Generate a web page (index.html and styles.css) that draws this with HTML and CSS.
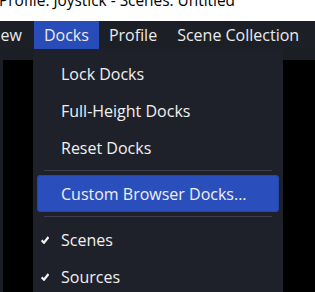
FILE: index.html
```html
<!DOCTYPE html>
<html lang="en">
<head>
  <meta charset="UTF-8" />
  <title>Docks menu</title>
  <link rel="stylesheet" href="styles.css">
</head>
<body>
  <div class="window">

    <!-- Title bar -->
    <div class="titlebar">
      <span class="title">Profile: Joystick - Scenes: Untitled</span>
    </div>

    <!-- Menu bar -->
    <div class="menubar">
      <span class="menubar-item cut">View</span>
      <span class="menubar-item active">Docks</span>
      <span class="menubar-item">Profile</span>
      <span class="menubar-item">Scene Collection</span>
    </div>

    <!-- Dock area behind the menu -->
    <div class="workspace">
      <div class="dock dock-left"></div>
      <div class="dock dock-right"></div>
    </div>

    <!-- Docks dropdown -->
    <div class="dropdown">
      <div class="menu-item">Lock Docks</div>
      <div class="menu-item">Full-Height Docks</div>
      <div class="menu-item">Reset Docks</div>
      <div class="separator"></div>
      <div class="menu-item selected">Custom Browser Docks...</div>
      <div class="separator"></div>
      <div class="menu-item checked">
        <svg class="check" viewBox="0 0 8 8" width="8" height="8"><path d="M0.7 4.3 L3 6.7 L7.5 1" fill="none" stroke="#f4f4f4" stroke-width="2.2"/></svg>
        Scenes
      </div>
      <div class="menu-item checked">
        <svg class="check" viewBox="0 0 8 8" width="8" height="8"><path d="M0.7 4.3 L3 6.7 L7.5 1" fill="none" stroke="#f4f4f4" stroke-width="2.2"/></svg>
        Sources
      </div>
    </div>

  </div>
</body>
</html>
```

FILE: styles.css
```css
body {
  margin: 0;
  padding: 0;
  font-family: 'Open Sans', 'Noto Sans', sans-serif;
  background-color: #1c1e25;
}

.window {
  width: 315px;
  height: 292px;
  position: relative;
  overflow: hidden;
  display: flex;
  flex-direction: column;
}

.titlebar {
  height: 21px;
  background-color: #ffffff;
  overflow: hidden;
  flex-shrink: 0;
}

.title {
  display: block;
  margin-top: -10px;
  margin-left: -1px;
  font-family: 'Open Sans', 'Noto Sans', sans-serif;
  font-size: 15.4px;
  line-height: 22px;
  color: #000;
  white-space: nowrap;
}

.menubar {
  height: 28px;
  background-color: #1d1f27;
  display: flex;
  align-items: stretch;
  flex-shrink: 0;
  white-space: nowrap;
}

.menubar-item {
  display: flex;
  align-items: center;
  padding: 0 10px;
  font-size: 16px;
  color: #ebebeb;
}

.menubar-item.cut {
  margin-left: -23px;
  padding-right: 12px;
}

.menubar-item.active {
  background-color: #284cb8;
}

.workspace {
  flex-grow: 1;
  display: flex;
  padding-top: 11px;
  background-color: #1c1e25;
}

.dock {
  background-color: #000;
}

.dock-left {
  width: 30px;
  margin-left: 3px;
}

.dock-right {
  width: 32px;
  margin-left: auto;
}

.dropdown {
  position: absolute;
  left: 33px;
  top: 49px;
  width: 250px;
  bottom: 0;
  background-color: #1f212a;
  padding-top: 6px;
  box-sizing: border-box;
}

.menu-item {
  height: 37px;
  display: flex;
  align-items: center;
  margin: 0 4px;
  padding-left: 24px;
  font-size: 16px;
  color: #f0f0f0;
  white-space: nowrap;
  position: relative;
}

.menu-item.selected {
  background-color: #2a4fbd;
  border-radius: 4px;
  box-shadow: inset 0 0 0 1px #2546ad;
}

.check {
  position: absolute;
  left: 4px;
  top: 15px;
}

.separator {
  height: 1px;
  margin: 4px 11px;
  background-color: #3c3f4a;
}
```
